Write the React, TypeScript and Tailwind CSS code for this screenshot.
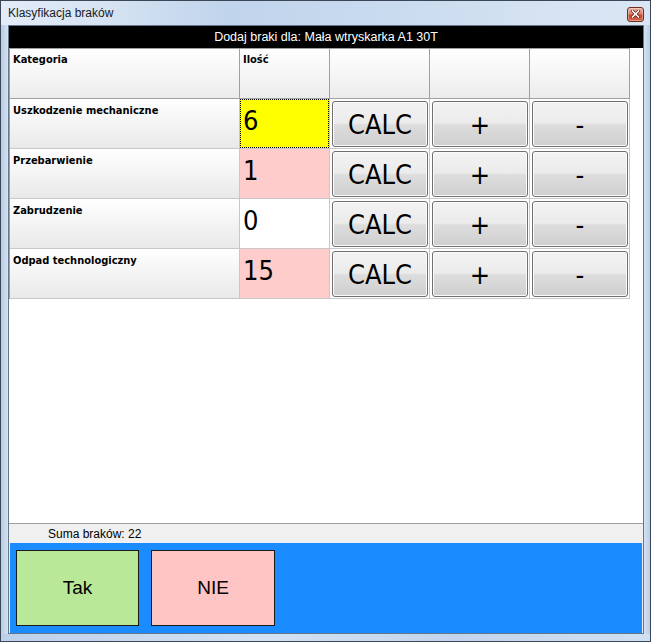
import React from "react";

type Row = { name: string; qty: string; kind: "focus" | "pink" | "white" };

const rows: Row[] = [
  { name: "Uszkodzenie mechaniczne", qty: "6", kind: "focus" },
  { name: "Przebarwienie", qty: "1", kind: "pink" },
  { name: "Zabrudzenie", qty: "0", kind: "white" },
  { name: "Odpad technologiczny", qty: "15", kind: "pink" },
];

const gridFont =
  "font-['DejaVu_Sans_Condensed','DejaVu_Sans',sans-serif] font-stretch-condensed";

function GButton({ label }: { label: string }) {
  return (
    <div className="h-[50px] border-r border-b border-[#c8c8c8] bg-white pl-[2px] pt-[2px]">
      <div
        className={`flex h-[46px] w-[96px] items-center justify-center rounded-[3px] border border-[#707070] bg-[linear-gradient(#f3f3f3,#ebebeb_48%,#dddddd_52%,#cfcfcf)] shadow-[inset_0_0_0_1px_#fbfbfb] text-[27px] leading-none text-black ${gridFont}`}
      >
        {label}
      </div>
    </div>
  );
}

export default function App() {
  return (
    <div className="h-[642px] w-[651px] overflow-hidden border border-[#3b4657] bg-[#c7d9ee] flex flex-col">
      {/* title bar */}
      <div className="flex h-[24px] items-center justify-between pl-[7px] pr-[6px] bg-[linear-gradient(90deg,#e3ecf7,#d7e4f3_15%,#c0d4ec_35%,#c9dbef_60%,#d6e3f2_85%,#dae6f4)]">
        <span className="font-['Liberation_Sans',sans-serif] text-[12px] leading-none text-[#1a1a1a]">
          Klasyfikacja braków
        </span>
        <div className="mt-[2px] flex h-[15px] w-[17px] items-center justify-center rounded-[3px] border border-[#6e2b1e] bg-[linear-gradient(#eab0a0,#d9806b_45%,#c8462f_55%,#d26a4f)] shadow-[inset_0_0_0_1px_rgba(255,255,255,0.35)]">
          <svg width="9" height="8" viewBox="0 0 9 8">
            <path d="M1.5 1 L7.5 7 M7.5 1 L1.5 7" stroke="#5a1a10" strokeWidth="3" strokeLinecap="square" />
            <path d="M1.5 1 L7.5 7 M7.5 1 L1.5 7" stroke="#ffffff" strokeWidth="1.6" strokeLinecap="square" />
          </svg>
        </div>
      </div>

      {/* middle */}
      <div className="flex h-[609px]">
        <div className="w-[7px] bg-[linear-gradient(90deg,#b9cde6,#d4e2f2)]" />
        <div className="flex w-[636px] flex-col border border-[#66768a] bg-[#f0f0f0]">
          {/* white panel */}
          <div className="flex h-[498px] flex-col border-b border-[#a0a0a0] bg-white">
            <div className="flex h-[22px] items-center justify-center bg-black font-['Liberation_Sans',sans-serif] text-[12.5px] leading-none text-white">
              Dodaj braki dla: Mała wtryskarka A1 30T
            </div>
            <div className="grid w-[621px] grid-cols-[230px_90px_100px_100px_100px] border-t border-l border-[#a0a0a0]">
              {/* header */}
              <div className={`h-[50px] border-r border-b border-[#a0a0a0] bg-linear-to-b from-white to-[#ececec] pl-[3px] pt-[4px] text-[11px] font-bold leading-[13px] text-black ${gridFont}`}>
                Kategoria
              </div>
              <div className={`h-[50px] border-r border-b border-[#a0a0a0] bg-linear-to-b from-white to-[#ececec] pl-[3px] pt-[4px] text-[11px] font-bold leading-[13px] text-black ${gridFont}`}>
                Ilość
              </div>
              <div className="h-[50px] border-r border-b border-[#a0a0a0] bg-linear-to-b from-white to-[#ececec]" />
              <div className="h-[50px] border-r border-b border-[#a0a0a0] bg-linear-to-b from-white to-[#ececec]" />
              <div className="h-[50px] border-r border-b border-[#a0a0a0] bg-linear-to-b from-white to-[#ececec]" />

              {rows.map((r) => (
                <React.Fragment key={r.name}>
                  <div className={`h-[50px] border-r border-b border-[#c8c8c8] bg-linear-to-b from-white to-[#e9e9e9] pl-[3px] pt-[5px] text-[11px] font-bold leading-[13px] text-black ${gridFont}`}>
                    {r.name}
                  </div>
                  {r.kind === "focus" ? (
                    <div className="h-[50px] border-r border-b border-[#c8c8c8] bg-white">
                      <div className={`h-full w-full border border-dotted border-black bg-[#ffff00] pl-[2px] pt-[5px] text-[27px] leading-[32px] text-black ${gridFont}`}>
                        {r.qty}
                      </div>
                    </div>
                  ) : (
                    <div
                      className={`h-[50px] border-r border-b border-[#c8c8c8] pl-[3px] pt-[6px] text-[27px] leading-[32px] text-black ${gridFont} ${
                        r.kind === "pink" ? "bg-[#ffcccc]" : "bg-white"
                      }`}
                    >
                      {r.qty}
                    </div>
                  )}
                  <GButton label="CALC" />
                  <GButton label="+" />
                  <GButton label="-" />
                </React.Fragment>
              ))}
            </div>
          </div>

          {/* sum strip */}
          <div className="flex h-[19px] items-center pl-[39px] font-['Liberation_Sans',sans-serif] text-[12px] leading-none text-black">
            Suma braków: 22
          </div>

          {/* blue action bar */}
          <div className="mx-px flex h-[90px] items-start bg-[#1a8cff] pl-[6px] pt-[7px]">
            <div className="flex h-[76px] w-[123px] items-center justify-center border border-[#1b1b1b] bg-[#b9e899] font-['Liberation_Sans',sans-serif] text-[19px] text-black">
              Tak
            </div>
            <div className="ml-[12px] flex h-[76px] w-[124px] items-center justify-center border border-[#1b1b1b] bg-[#ffc4c4] font-['Liberation_Sans',sans-serif] text-[19px] text-black">
              NIE
            </div>
          </div>
        </div>
        <div className="flex-1 bg-[linear-gradient(90deg,#d4e2f2,#b9cde6)]" />
      </div>

      {/* bottom frame */}
      <div className="flex-1 bg-[linear-gradient(90deg,#bcd0ea,#d3e2f3_40%,#c2d5ec_70%,#cfe0f2)]" />
    </div>
  );
}
